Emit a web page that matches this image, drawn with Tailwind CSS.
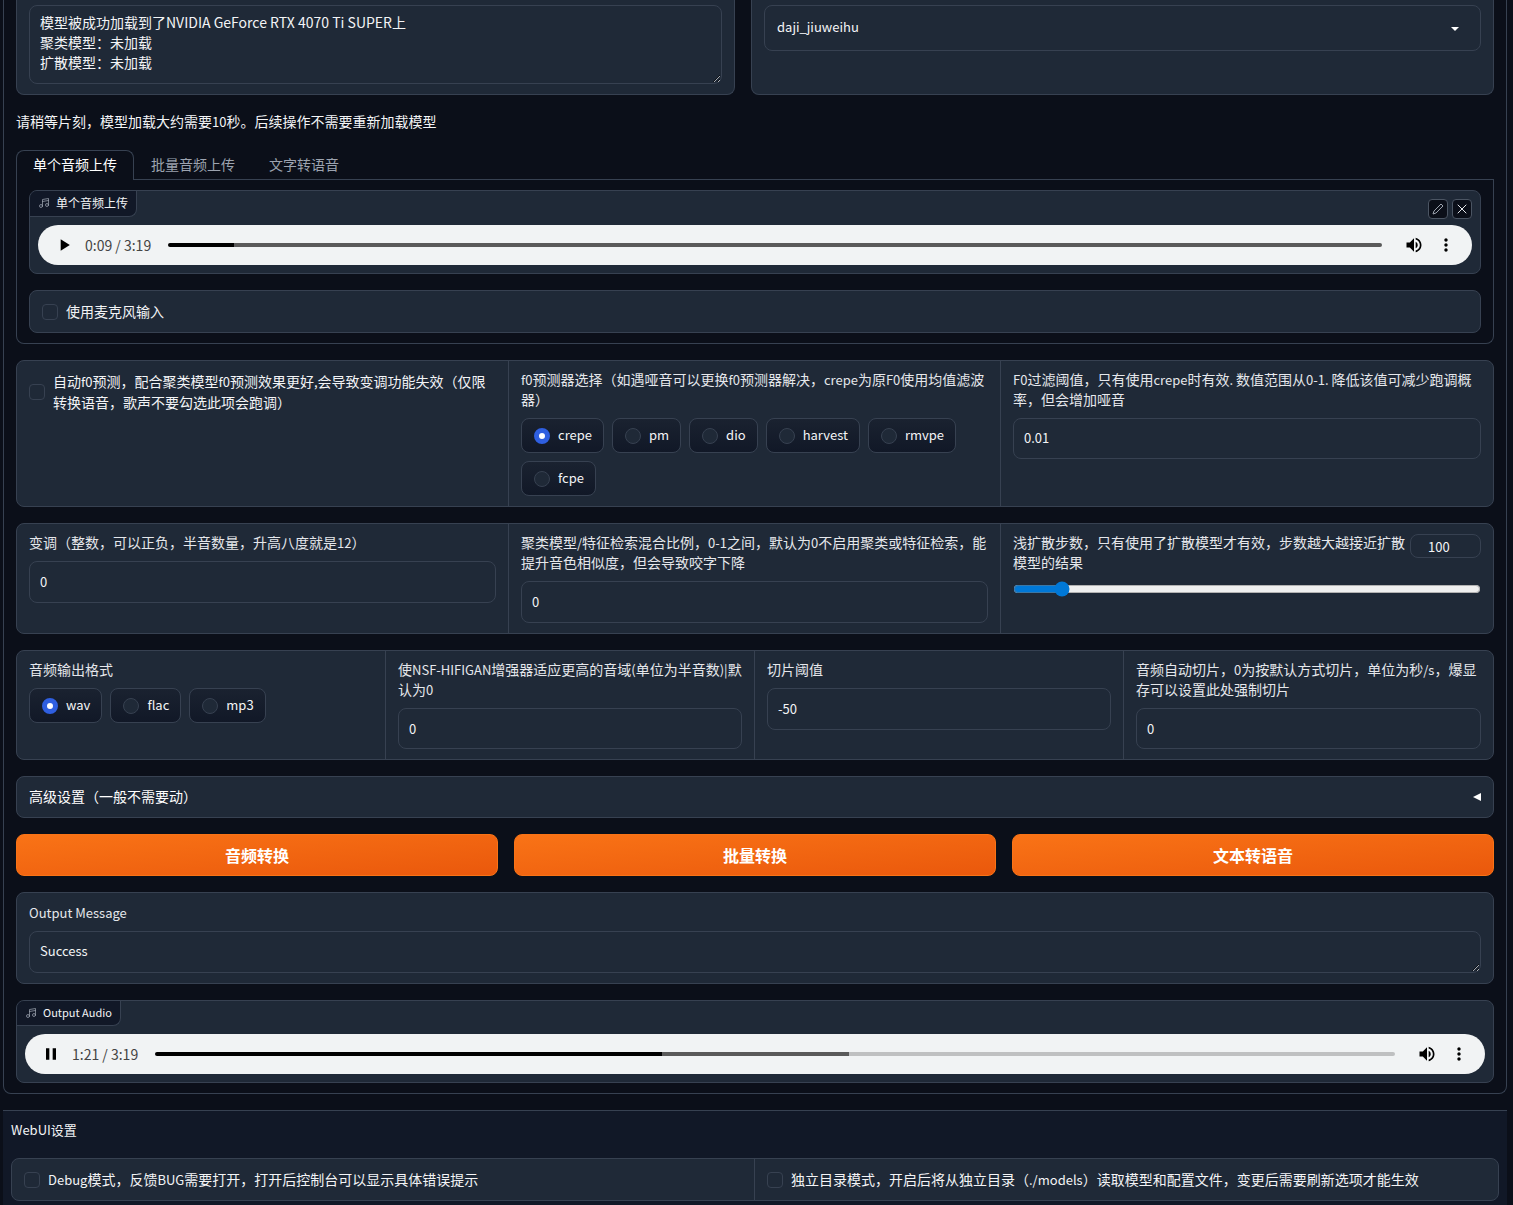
<!DOCTYPE html>
<html lang="zh-CN">
<head>
  <meta charset="UTF-8">
  <meta name="viewport" content="width=device-width, initial-scale=1">
  <title>So-VITS-SVC WebUI</title>
  <script src="https://cdn.jsdelivr.net/npm/@tailwindcss/browser@4"></script>
</head>
<body class="bg-[#0b0f19] text-[#f3f4f6] font-['Noto_Sans_CJK_SC',sans-serif] text-sm min-h-screen flex flex-col pl-[3px] pr-[6px]">

  <main class="border-x border-b border-[#374151] rounded-b-lg px-3 pb-[10px] flex flex-col gap-4">

    <!-- 模型状态 / 音色选择 -->
    <div class="grid grid-cols-[719fr_743fr] gap-4">
      <div class="bg-[#1f2937] border-x border-b border-[#374151] rounded-b-lg px-3 pt-[5px] pb-[10px]">
        <textarea aria-label="Output Message" readonly class="block w-full h-[79px] bg-[#1f2937] border border-[#374151] rounded-lg px-[10px] py-[6px] leading-5 overflow-hidden resize">模型被成功加载到了NVIDIA GeForce RTX 4070 Ti SUPER上
聚类模型：未加载
扩散模型：未加载</textarea>
      </div>
      <div class="bg-[#1f2937] border-x border-b border-[#374151] rounded-b-lg px-3 pt-[5px] pb-[10px]">
        <div class="relative">
          <select aria-label="选择说话人" class="block w-full h-[46px] appearance-none bg-[#1f2937] border border-[#374151] rounded-lg px-3 pb-[2px] text-[13px]">
            <option>daji_jiuweihu</option>
          </select>
          <svg class="absolute right-[22px] top-[22px] w-2 h-1 pointer-events-none" viewBox="0 0 8 4" fill="#fff"><path d="M0 0h8L4 4z"/></svg>
        </div>
      </div>
    </div>

    <p class="leading-5 pb-[3px]">请稍等片刻，模型加载大约需要<span class="text-[13px] leading-none">10</span>秒。后续操作不需要重新加载模型</p>

    <!-- 上传 -->
    <section>
      <div class="flex border-b border-[#374151]" role="tablist">
        <button role="tab" aria-selected="true" class="h-[30px] px-4 pb-[3px] -mb-px border border-b-0 border-[#374151] rounded-t-lg bg-[#0b0f19] text-white">单个音频上传</button>
        <button role="tab" class="h-[29px] px-4 pb-[2px] border border-b-0 border-transparent text-[#9ca3af]">批量音频上传</button>
        <button role="tab" class="h-[29px] px-4 pb-[2px] border border-b-0 border-transparent text-[#9ca3af]">文字转语音</button>
      </div>
      <div class="border border-t-0 border-[#374151] rounded-b-lg px-3 py-[10px] flex flex-col gap-4">
        <div class="relative bg-[#1f2937] border border-[#374151] rounded-lg overflow-hidden">
          <div class="inline-flex items-center h-[26px] px-2 pb-[2px] gap-[6px] align-top bg-[#111827] border-r border-b border-[#374151] rounded-br-lg text-xs">
            <svg class="w-3 h-3 text-[#9ca3af]" viewBox="0 0 24 24" fill="none" stroke="currentColor" stroke-width="1.5" stroke-linecap="round" stroke-linejoin="round"><path d="M9 18V5l12-2v13M9 9l12-2"/><circle cx="6" cy="18" r="3"/><circle cx="18" cy="16" r="3"/></svg>
            单个音频上传
          </div>
          <div class="absolute top-2 right-2 flex gap-1">
            <button aria-label="编辑" class="w-5 h-5 flex items-center justify-center bg-[#0b0f19] border border-[#4b5563] rounded text-[#9ca3af]">
              <svg class="w-3 h-3" viewBox="0 0 24 24" fill="none" stroke="currentColor" stroke-width="2" stroke-linejoin="round"><path d="M18 2l4 4L8 20l-6 2 2-6z"/></svg>
            </button>
            <button aria-label="清除" class="w-5 h-5 flex items-center justify-center bg-[#0b0f19] border border-[#4b5563] rounded text-[#e5e7eb]">
              <svg class="w-3 h-3" viewBox="0 0 24 24" fill="none" stroke="currentColor" stroke-width="2" stroke-linecap="round"><path d="M4 4l16 16M20 4L4 20"/></svg>
            </button>
          </div>
          <div class="flex items-center h-10 m-2 px-[10px] bg-[#f1f3f4] rounded-full text-black">
            <button aria-label="播放" class="w-8 h-8 flex items-center justify-center"><svg class="w-5 h-5" viewBox="0 0 24 24"><path d="M8 5v14l11-7z"/></svg></button>
            <span class="ml-[5px] w-[67px] whitespace-nowrap text-[#444]">0:09 / 3:19</span>
            <input type="range" aria-label="播放进度" value="5" class="flex-1 min-w-0 mx-4 h-1 appearance-none rounded-full bg-[linear-gradient(to_right,#000_5.4%,#5a5a5a_5.4%)] [&::-webkit-slider-thumb]:appearance-none">
            <button aria-label="音量" class="w-8 h-8 flex items-center justify-center"><svg class="w-5 h-5" viewBox="0 0 24 24"><path d="M3 9v6h4l5 5V4L7 9H3zm13.500 3A4.500 4.500 0 0014 7.970v8.050c1.480-.73 2.500-2.250 2.500-4.020zM14 3.230v2.060c2.890.86 5 3.540 5 6.710s-2.110 5.850-5 6.710v2.060c4.010-.91 7-4.490 7-8.770s-2.990-7.860-7-8.770z"/></svg></button>
            <button aria-label="更多" class="w-8 h-8 flex items-center justify-center"><svg class="w-5 h-5" viewBox="0 0 24 24"><path d="M12 8c1.100 0 2-.9 2-2s-.9-2-2-2-2 .9-2 2 .9 2 2 2zm0 2c-1.100 0-2 .9-2 2s.9 2 2 2 2-.9 2-2-.9-2-2-2zm0 6c-1.100 0-2 .9-2 2s.9 2 2 2 2-.9 2-2-.9-2-2-2z"/></svg></button>
          </div>
        </div>
        <div class="bg-[#1f2937] border border-[#374151] rounded-lg px-3 py-[10px]">
          <label class="flex items-center gap-2 leading-[21px]">
            <input type="checkbox" class="appearance-none w-4 h-4 shrink-0 bg-[#1f2937] border border-[#374151] rounded checked:bg-[#2563eb]">
            使用麦克风输入
          </label>
        </div>
      </div>
    </section>

    <!-- f0 -->
    <div class="grid grid-cols-3 divide-x divide-[#374151] bg-[#1f2937] border border-[#374151] rounded-lg">
      <div class="px-3 py-[10px]">
        <label class="flex items-center gap-2 leading-[21px]">
          <input type="checkbox" class="appearance-none w-4 h-4 shrink-0 bg-[#1f2937] border border-[#374151] rounded checked:bg-[#2563eb]">
          <span>自动<span class="text-[13px] leading-none">f0</span>预测，配合聚类模型<span class="text-[13px] leading-none">f0</span>预测效果更好<span class="text-[13px] leading-none">,</span>会导致变调功能失效（仅限转换语音，歌声不要勾选此项会跑调）</span>
        </label>
      </div>
      <fieldset class="px-3 pt-2 pb-[10px] min-w-0">
        <legend class="contents"><span class="block leading-5 mb-[9px] text-[#e5e7eb]"><span class="text-[13px] leading-none">f0</span>预测器选择（如遇哑音可以更换<span class="text-[13px] leading-none">f0</span>预测器解决，<span class="text-[13px] leading-none">crepe</span>为原<span class="text-[13px] leading-none">F0</span>使用均值滤波器）</span></legend>
        <div class="flex flex-wrap gap-2 text-[13px]">
          <label class="flex items-center gap-2 h-[35px] pl-3 pr-[11px] border border-[#374151] rounded-lg bg-linear-to-t from-[#111827] to-[#1a2230]"><input type="radio" name="f0" checked class="appearance-none w-4 h-4 rounded-full border border-[#374151] bg-[#1f2937] checked:border-[5px] checked:border-[#2f5fe0] checked:bg-white">crepe</label>
          <label class="flex items-center gap-2 h-[35px] pl-3 pr-[11px] border border-[#374151] rounded-lg bg-linear-to-t from-[#111827] to-[#1a2230]"><input type="radio" name="f0" class="appearance-none w-4 h-4 rounded-full border border-[#374151] bg-[#1f2937] checked:border-[5px] checked:border-[#2f5fe0] checked:bg-white">pm</label>
          <label class="flex items-center gap-2 h-[35px] pl-3 pr-[11px] border border-[#374151] rounded-lg bg-linear-to-t from-[#111827] to-[#1a2230]"><input type="radio" name="f0" class="appearance-none w-4 h-4 rounded-full border border-[#374151] bg-[#1f2937] checked:border-[5px] checked:border-[#2f5fe0] checked:bg-white">dio</label>
          <label class="flex items-center gap-2 h-[35px] pl-3 pr-[11px] border border-[#374151] rounded-lg bg-linear-to-t from-[#111827] to-[#1a2230]"><input type="radio" name="f0" class="appearance-none w-4 h-4 rounded-full border border-[#374151] bg-[#1f2937] checked:border-[5px] checked:border-[#2f5fe0] checked:bg-white">harvest</label>
          <label class="flex items-center gap-2 h-[35px] pl-3 pr-[11px] border border-[#374151] rounded-lg bg-linear-to-t from-[#111827] to-[#1a2230]"><input type="radio" name="f0" class="appearance-none w-4 h-4 rounded-full border border-[#374151] bg-[#1f2937] checked:border-[5px] checked:border-[#2f5fe0] checked:bg-white">rmvpe</label>
          <label class="flex items-center gap-2 h-[35px] pl-3 pr-[11px] border border-[#374151] rounded-lg bg-linear-to-t from-[#111827] to-[#1a2230]"><input type="radio" name="f0" class="appearance-none w-4 h-4 rounded-full border border-[#374151] bg-[#1f2937] checked:border-[5px] checked:border-[#2f5fe0] checked:bg-white">fcpe</label>
        </div>
      </fieldset>
      <div class="px-3 pt-2 pb-[10px]">
        <label for="f0Threshold" class="block leading-5 mb-[9px] text-[#e5e7eb]"><span class="text-[13px] leading-none">F0</span>过滤阈值，只有使用<span class="text-[13px] leading-none">crepe</span>时有效<span class="text-[13px] leading-none">. </span>数值范围从<span class="text-[13px] leading-none">0-1. </span>降低该值可减少跑调概率，但会增加哑音</label>
        <input id="f0Threshold" type="text" value="0.01" class="block w-full h-[41px] bg-[#1f2937] border border-[#374151] rounded-lg px-[10px] pb-[2px] text-[13px]">
      </div>
    </div>

    <!-- 变调 -->
    <div class="grid grid-cols-3 divide-x divide-[#374151] bg-[#1f2937] border border-[#374151] rounded-lg">
      <div class="px-3 pt-2 pb-[10px]">
        <label for="transform" class="block leading-5 mb-[9px] text-[#e5e7eb]">变调（整数，可以正负，半音数量，升高八度就是<span class="text-[13px] leading-none">12</span>）</label>
        <input id="transform" type="text" value="0" class="block w-full h-[42px] bg-[#1f2937] border border-[#374151] rounded-lg px-[10px] pb-[2px] text-[13px]">
      </div>
      <div class="px-3 pt-2 pb-[10px]">
        <label for="clusterRatio" class="block leading-5 mb-[9px] text-[#e5e7eb]">聚类模型<span class="text-[13px] leading-none">/</span>特征检索混合比例，<span class="text-[13px] leading-none">0-1</span>之间，默认为<span class="text-[13px] leading-none">0</span>不启用聚类或特征检索，能提升音色相似度，但会导致咬字下降</label>
        <input id="clusterRatio" type="text" value="0" class="block w-full h-[42px] bg-[#1f2937] border border-[#374151] rounded-lg px-[10px] pb-[2px] text-[13px]">
      </div>
      <div class="px-3 pt-2 pb-[10px]">
        <div class="flex items-start mb-[9px]">
          <label for="kStep" class="flex-1 leading-5 text-[#e5e7eb]">浅扩散步数，只有使用了扩散模型才有效，步数越大越接近扩散模型的结果</label>
          <input type="text" aria-label="浅扩散步数" value="100" class="w-[71px] h-6 mt-[2px] bg-[#1f2937] border border-[#374151] rounded-lg pl-[17px] text-[13px]">
        </div>
        <input id="kStep" type="range" min="0" max="1000" value="90" class="block w-full h-4 accent-[#0078d7]">
      </div>
    </div>

    <!-- 输出格式 -->
    <div class="grid grid-cols-4 divide-x divide-[#374151] bg-[#1f2937] border border-[#374151] rounded-lg">
      <fieldset class="px-3 pt-2 pb-[10px] min-w-0">
        <legend class="contents"><span class="block leading-5 mb-[9px] text-[#e5e7eb]">音频输出格式</span></legend>
        <div class="flex flex-wrap gap-2 text-[13px]">
          <label class="flex items-center gap-2 h-[35px] pl-3 pr-[11px] border border-[#374151] rounded-lg bg-linear-to-t from-[#111827] to-[#1a2230]"><input type="radio" name="format" checked class="appearance-none w-4 h-4 rounded-full border border-[#374151] bg-[#1f2937] checked:border-[5px] checked:border-[#2f5fe0] checked:bg-white">wav</label>
          <label class="flex items-center gap-2 h-[35px] pl-3 pr-[11px] border border-[#374151] rounded-lg bg-linear-to-t from-[#111827] to-[#1a2230]"><input type="radio" name="format" class="appearance-none w-4 h-4 rounded-full border border-[#374151] bg-[#1f2937] checked:border-[5px] checked:border-[#2f5fe0] checked:bg-white">flac</label>
          <label class="flex items-center gap-2 h-[35px] pl-3 pr-[11px] border border-[#374151] rounded-lg bg-linear-to-t from-[#111827] to-[#1a2230]"><input type="radio" name="format" class="appearance-none w-4 h-4 rounded-full border border-[#374151] bg-[#1f2937] checked:border-[5px] checked:border-[#2f5fe0] checked:bg-white">mp3</label>
        </div>
      </fieldset>
      <div class="px-3 pt-2 pb-[10px]">
        <label for="enhancer" class="block leading-5 mb-[9px] text-[#e5e7eb]">使<span class="text-[13px] leading-none">NSF-HIFIGAN</span>增强器适应更高的音域<span class="text-[13px] leading-none">(</span>单位为半音数<span class="text-[13px] leading-none">)|</span>默认为<span class="text-[13px] leading-none">0</span></label>
        <input id="enhancer" type="text" value="0" class="block w-full h-[41px] bg-[#1f2937] border border-[#374151] rounded-lg px-[10px] text-[13px]">
      </div>
      <div class="px-3 pt-2 pb-[10px]">
        <label for="sliceDb" class="block leading-5 mb-[9px] text-[#e5e7eb]">切片阈值</label>
        <input id="sliceDb" type="text" value="-50" class="block w-full h-[42px] bg-[#1f2937] border border-[#374151] rounded-lg px-[10px] pb-[2px] text-[13px]">
      </div>
      <div class="px-3 pt-2 pb-[10px]">
        <label for="clip" class="block leading-5 mb-[9px] text-[#e5e7eb]">音频自动切片，<span class="text-[13px] leading-none">0</span>为按默认方式切片，单位为秒<span class="text-[13px] leading-none">/s</span>，爆显存可以设置此处强制切片</label>
        <input id="clip" type="text" value="0" class="block w-full h-[41px] bg-[#1f2937] border border-[#374151] rounded-lg px-[10px] text-[13px]">
      </div>
    </div>

    <button class="flex items-center justify-between h-[42px] px-3 bg-[#1f2937] border border-[#374151] rounded-lg text-white">
      <span class="pb-[3px]">高级设置（一般不需要动）</span>
      <svg class="w-2 h-2" viewBox="0 0 8 8" fill="currentColor"><path d="M8 0v8L0 4z"/></svg>
    </button>

    <div class="grid grid-cols-3 gap-4 text-base font-bold text-white">
      <button class="h-[42px] border border-[#f97316] rounded-lg bg-linear-to-br from-[#f97316] to-[#ea580c]">音频转换</button>
      <button class="h-[42px] border border-[#f97316] rounded-lg bg-linear-to-br from-[#f97316] to-[#ea580c]">批量转换</button>
      <button class="h-[42px] border border-[#f97316] rounded-lg bg-linear-to-br from-[#f97316] to-[#ea580c]">文本转语音</button>
    </div>

    <!-- 输出 -->
    <div class="bg-[#1f2937] border border-[#374151] rounded-lg px-3 py-[10px]">
      <label for="output" class="block leading-5 mb-2 text-[13px] text-[#e5e7eb]">Output Message</label>
      <textarea id="output" readonly class="block w-full h-[42px] bg-[#1f2937] border border-[#374151] rounded-lg px-[10px] py-[9px] text-[13px] leading-5 overflow-hidden resize">Success</textarea>
    </div>

    <div class="bg-[#1f2937] border border-[#374151] rounded-lg overflow-hidden">
      <div class="inline-flex items-center h-[25px] px-2 gap-[6px] align-top bg-[#111827] border-r border-b border-[#374151] rounded-br-lg text-[11px]">
        <svg class="w-3 h-3 text-[#9ca3af]" viewBox="0 0 24 24" fill="none" stroke="currentColor" stroke-width="1.5" stroke-linecap="round" stroke-linejoin="round"><path d="M9 18V5l12-2v13M9 9l12-2"/><circle cx="6" cy="18" r="3"/><circle cx="18" cy="16" r="3"/></svg>
        Output Audio
      </div>
      <div class="flex items-center h-10 m-2 px-[10px] bg-[#f1f3f4] rounded-full text-black">
        <button aria-label="暂停" class="w-8 h-8 flex items-center justify-center"><svg class="w-5 h-5" viewBox="0 0 24 24"><path d="M6 19h4V5H6v14zm8-14v14h4V5h-4z"/></svg></button>
        <span class="ml-[5px] w-[67px] whitespace-nowrap text-[#444]">1:21 / 3:19</span>
        <input type="range" aria-label="播放进度" value="41" class="flex-1 min-w-0 mx-4 h-1 appearance-none rounded-full bg-[linear-gradient(to_right,#000_40.9%,#5a5a5a_40.9%,#5a5a5a_56%,#bfc0c1_56%)] [&::-webkit-slider-thumb]:appearance-none">
        <button aria-label="音量" class="w-8 h-8 flex items-center justify-center"><svg class="w-5 h-5" viewBox="0 0 24 24"><path d="M3 9v6h4l5 5V4L7 9H3zm13.500 3A4.500 4.500 0 0014 7.970v8.050c1.480-.73 2.500-2.250 2.500-4.020zM14 3.230v2.060c2.890.86 5 3.540 5 6.710s-2.110 5.850-5 6.710v2.060c4.010-.91 7-4.490 7-8.770s-2.990-7.860-7-8.770z"/></svg></button>
        <button aria-label="更多" class="w-8 h-8 flex items-center justify-center"><svg class="w-5 h-5" viewBox="0 0 24 24"><path d="M12 8c1.100 0 2-.9 2-2s-.9-2-2-2-2 .9-2 2 .9 2 2 2zm0 2c-1.100 0-2 .9-2 2s.9 2 2 2 2-.9 2-2-.9-2-2-2zm0 6c-1.100 0-2 .9-2 2s.9 2 2 2 2-.9 2-2-.9-2-2-2z"/></svg></button>
      </div>
    </div>
  </main>

  <!-- WebUI设置 -->
  <section class="flex-1 mt-4 px-2 pt-[9px] pb-1 bg-[#111827] border-t border-[#374151]">
    <h2 class="text-[13px] leading-5 mb-[18px]">WebUI设置</h2>
    <div class="grid grid-cols-2 divide-x divide-[#374151] bg-[#1f2937] border border-[#374151] rounded-lg">
      <label class="flex items-center gap-2 px-3 py-[10px] leading-[21px]">
        <input type="checkbox" class="appearance-none w-4 h-4 shrink-0 bg-[#1f2937] border border-[#374151] rounded checked:bg-[#2563eb]">
        <span><span class="text-[13px] leading-none">Debug</span>模式，反馈<span class="text-[13px] leading-none">BUG</span>需要打开，打开后控制台可以显示具体错误提示</span>
      </label>
      <label class="flex items-center gap-2 px-3 py-[10px] leading-[21px]">
        <input type="checkbox" class="appearance-none w-4 h-4 shrink-0 bg-[#1f2937] border border-[#374151] rounded checked:bg-[#2563eb]">
        <span>独立目录模式，开启后将从独立目录（<span class="text-[13px] leading-none">./models</span>）读取模型和配置文件，变更后需要刷新选项才能生效</span>
      </label>
    </div>
  </section>

</body>
</html>
